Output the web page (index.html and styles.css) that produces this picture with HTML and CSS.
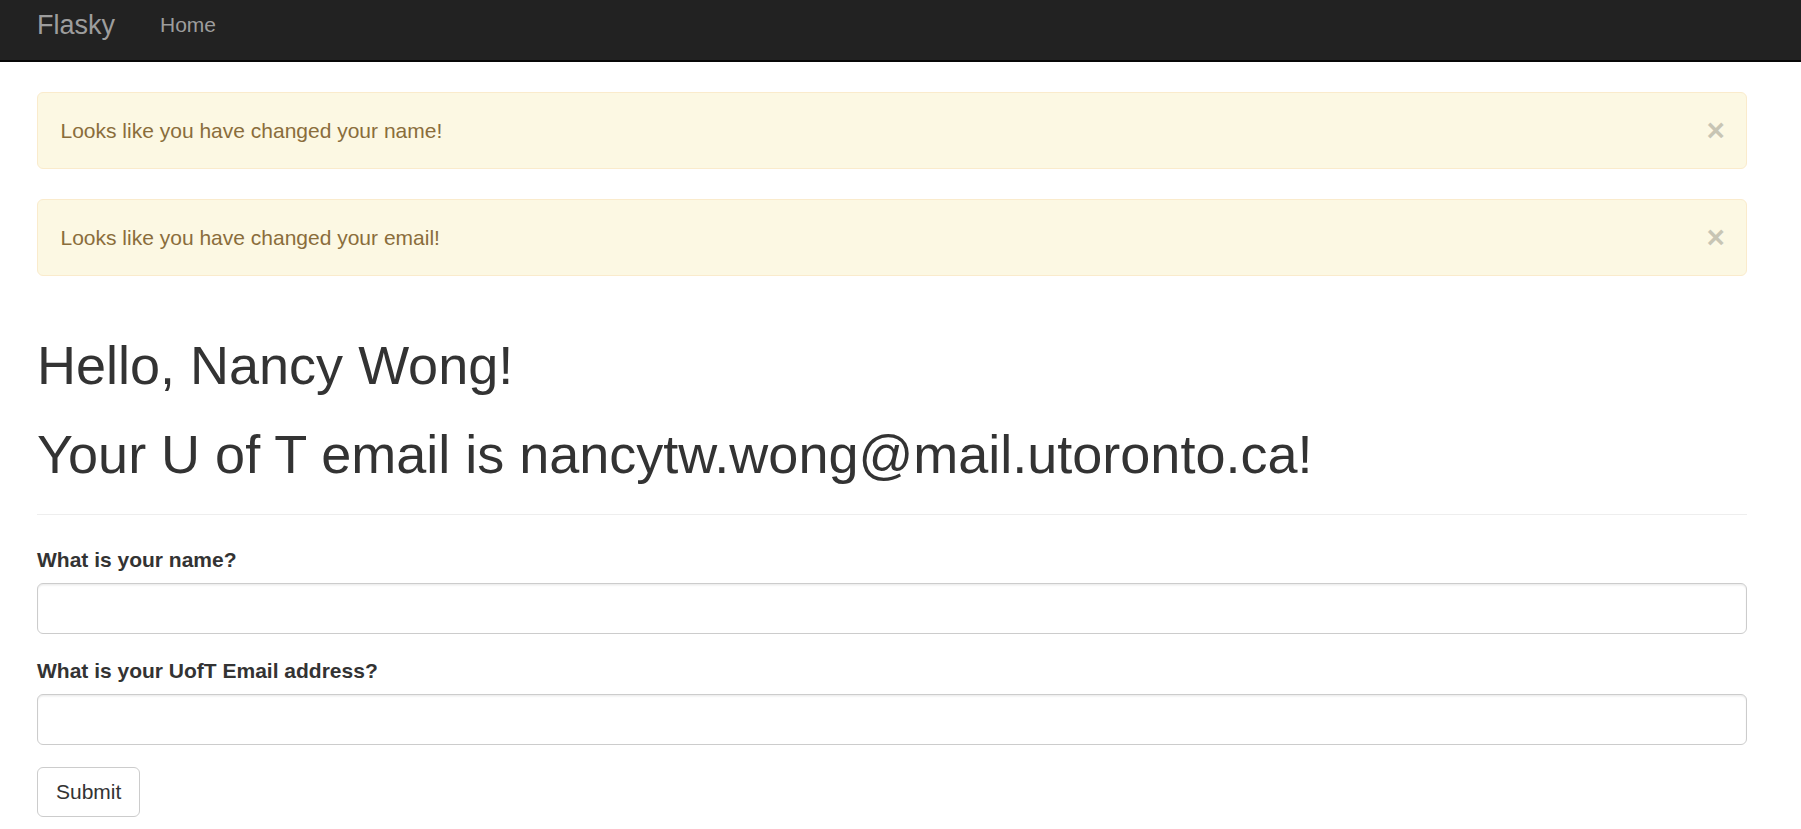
FILE: index.html
```html
<!DOCTYPE html>
<html lang="en">
<head>
<meta charset="utf-8">
<title>Flasky</title>
<link rel="stylesheet" href="styles.css">
</head>
<body>
<div class="navbar">
  <div class="container nav-inner">
    <a class="brand" href="#">Flasky</a>
    <ul class="nav">
      <li><a href="#">Home</a></li>
    </ul>
  </div>
</div>

<div class="container">
  <div class="alert">
    <span class="alert-text">Looks like you have changed your name!</span>
    <button type="button" class="close">&times;</button>
  </div>
  <div class="alert">
    <span class="alert-text">Looks like you have changed your email!</span>
    <button type="button" class="close">&times;</button>
  </div>

  <div class="page-header">
    <h1>Hello, Nancy Wong!</h1>
    <h1>Your U of T email is nancytw.wong@mail.utoronto.ca!</h1>
  </div>

  <form class="form">
    <div class="form-group">
      <label class="control-label" for="name">What is your name?</label>
      <input class="form-control" id="name" type="text">
    </div>
    <div class="form-group">
      <label class="control-label" for="email">What is your UofT Email address?</label>
      <input class="form-control" id="email" type="text">
    </div>
    <button type="button" class="btn">Submit</button>
  </form>
</div>
</body>
</html>
```

FILE: styles.css
```css
* {
  box-sizing: border-box;
}

html, body {
  margin: 0;
  padding: 0;
  background: #fff;
}

body {
  font-family: "Liberation Sans", Arial, Helvetica, sans-serif;
  font-size: 21px;
  line-height: 30px;
  color: #333;
}

.container {
  width: 1755px;
  margin-left: 14.5px;
  padding: 0 22.5px;
}

/* Navbar */
.navbar {
  height: 62px;
  background: #222;
  border-bottom: 2px solid #080808;
  overflow: hidden;
}

.nav-inner {
  display: flex;
  align-items: flex-start;
}

.brand {
  display: block;
  padding: 9.5px 22.5px 0 0;
  font-size: 27px;
  line-height: 30px;
  color: #9d9d9d;
  text-decoration: none;
}

.nav {
  display: flex;
  list-style: none;
  margin: 0;
  padding: 0;
}

.nav a {
  display: block;
  padding: 9.5px 22.5px 0;
  font-size: 21px;
  line-height: 30px;
  color: #9d9d9d;
  text-decoration: none;
}

/* Alerts */
.alert {
  display: flex;
  align-items: flex-start;
  height: 77px;
  margin-top: 30px;
  margin-bottom: 30px;
  padding: 22.5px 21px 22.5px 22.5px;
  background: #fcf8e3;
  border: 1px solid #faebcc;
  border-radius: 6px;
  color: #8a6d3b;
}

.alert + .alert {
  margin-top: 0;
}

.alert-text {
  flex: 1;
}

.close {
  margin: -0.5px 0 -2px auto;
  padding: 0;
  border: 0;
  background: transparent;
  font-family: "Liberation Sans", Arial, sans-serif;
  font-size: 31.5px;
  font-weight: bold;
  line-height: 1;
  color: #000;
  opacity: 0.2;
  text-shadow: 0 1.5px 0 #fff;
  cursor: pointer;
}

/* Page header */
.page-header {
  margin: 60px 0 30px;
  padding-bottom: 14.5px;
  border-bottom: 1px solid #eee;
}

.page-header h1 {
  margin: 30px 0 15px;
  font-size: 54px;
  line-height: 59.4px;
  font-weight: 500;
  color: #333;
}

.page-header h1:first-child {
  margin-top: 0;
}

/* Form */
.form-group {
  margin-bottom: 22.5px;
}

.control-label {
  display: inline-block;
  margin-bottom: 7.5px;
  font-weight: bold;
}

.form-control {
  display: block;
  width: 100%;
  height: 51px;
  padding: 9px 18px;
  font-family: inherit;
  font-size: 21px;
  line-height: 30px;
  color: #555;
  background: #fff;
  border: 1px solid #ccc;
  border-radius: 6px;
  box-shadow: inset 0 1.5px 1.5px rgba(0, 0, 0, 0.075);
}

.btn {
  display: inline-block;
  padding: 9px 18px;
  font-family: inherit;
  font-size: 21px;
  line-height: 30px;
  color: #333;
  background: #fff;
  border: 1px solid #ccc;
  border-radius: 6px;
  cursor: pointer;
}
```
